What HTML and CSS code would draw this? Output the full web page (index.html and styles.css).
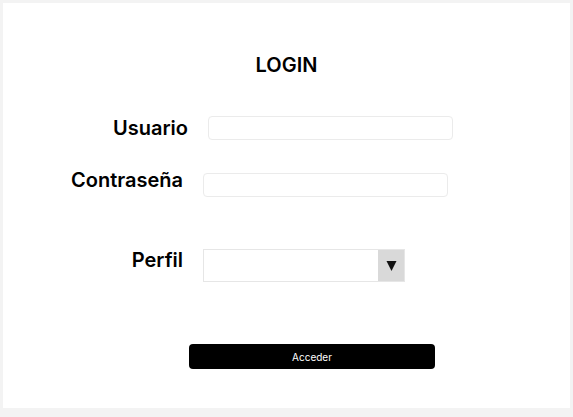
FILE: index.html
```html
<!DOCTYPE html>
<html lang="es">
<head>
<meta charset="utf-8">
<title>Login</title>
<link rel="stylesheet" href="styles.css">
</head>
<body>
<main class="card">
  <h1 class="title">LOGIN</h1>
  <form class="form">
    <div class="row row-user">
      <label class="label" for="u">Usuario</label>
      <input class="input" id="u" type="text">
    </div>
    <div class="row row-pass">
      <label class="label" for="p">Contraseña</label>
      <input class="input" id="p" type="password">
    </div>
    <div class="row row-profile">
      <label class="label" for="s">Perfil</label>
      <div class="select">
        <select class="select-field" id="s"></select>
        <span class="select-arrow"><svg width="11" height="11" viewBox="0 0 11 11"><polygon points="0.5,1 10.5,1 5.5,11" fill="#111"/></svg></span>
      </div>
    </div>
    <button class="button" type="button">Acceder</button>
  </form>
</main>
</body>
</html>
```
FILE: styles.css
```css
* { box-sizing: border-box; }
html, body { margin: 0; padding: 0; }
body {
  background: #f3f3f3;
  padding: 3px;
  font-family: Inter, "Liberation Sans", sans-serif;
  color: #000;
}
.card {
  background: #fff;
  width: 567px;
  height: 405px;
  padding-top: 50px;
  display: flex;
  flex-direction: column;
}
.title {
  margin: 0;
  text-align: center;
  font-size: 20px;
  line-height: 24px;
  font-weight: 600;
}
.form {
  display: flex;
  flex-direction: column;
  padding-left: 68px;
}
.row {
  display: flex;
  gap: 20px;
  align-items: flex-start;
}
.row-user { margin-top: 39px; margin-left: 5px; align-items: center; }
.row-pass { margin-top: 33px; }
.row-profile { margin-top: 52px; }
.label {
  width: 112px;
  text-align: right;
  font-size: 20px;
  font-weight: 600;
  line-height: 22px;
  white-space: nowrap;
}
.row-pass .label { margin-top: -4px; }
.input {
  width: 245px;
  height: 24px;
  border: 1px solid #ebebeb;
  border-radius: 4px;
  background: #fff;
  margin: 0;
  padding: 0 6px;
  outline: none;
}
.select {
  width: 202px;
  height: 33px;
  border: 1px solid #e6e6e6;
  display: flex;
}
.select-field {
  flex: 1;
  border: 0;
  margin: 0;
  appearance: none;
  -webkit-appearance: none;
  background: #fff;
  outline: none;
}
.select-arrow {
  width: 26px;
  background: #d9d9d9;
  display: flex;
  align-items: center;
  justify-content: center;
}
.button {
  margin-top: 62px;
  margin-left: 118px;
  width: 246px;
  height: 25px;
  background: #000;
  color: #fff;
  border: 0;
  border-radius: 4px;
  font-family: Inter, "Liberation Sans", sans-serif;
  font-size: 10px;
  padding: 0;
}
```
